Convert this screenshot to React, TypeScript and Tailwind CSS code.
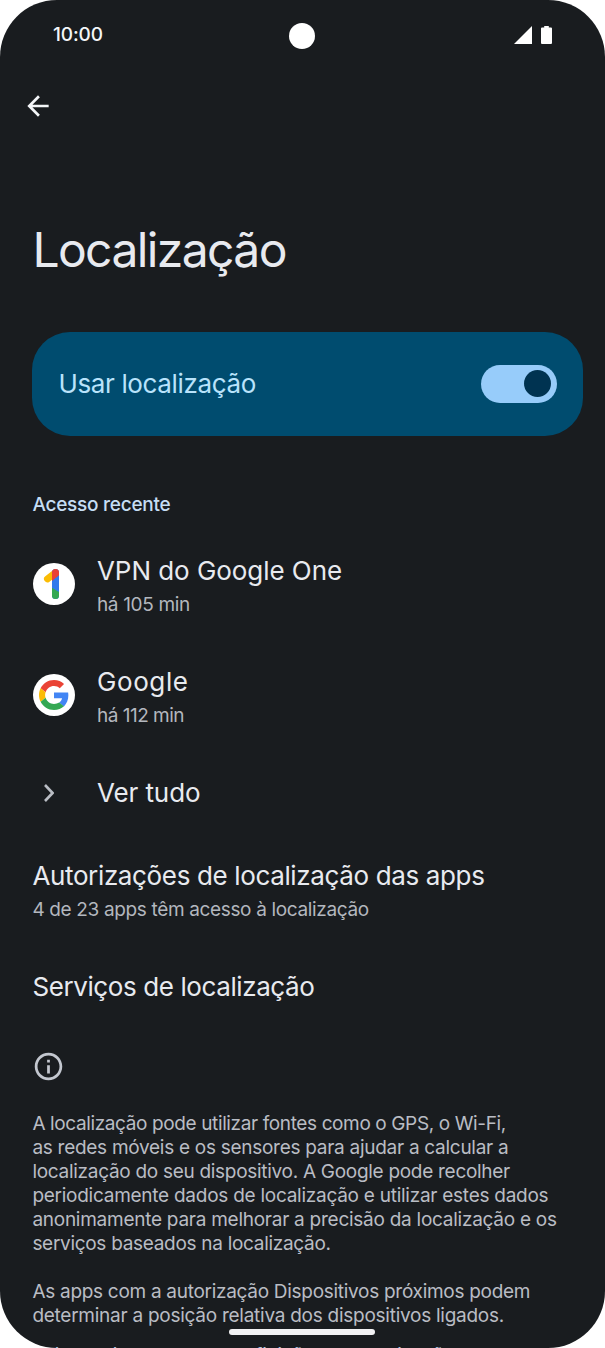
import { useState } from "react";

const infoLines = [
  { text: "A localização pode utilizar fontes como o GPS, o Wi-Fi,", track: "tracking-[-0.38px]" },
  { text: "as redes móveis e os sensores para ajudar a calcular a", track: "tracking-[-0.28px]" },
  { text: "localização do seu dispositivo. A Google pode recolher", track: "tracking-[-0.29px]" },
  { text: "periodicamente dados de localização e utilizar estes dados", track: "tracking-[-0.26px]" },
  { text: "anonimamente para melhorar a precisão da localização e os", track: "tracking-[-0.26px]" },
  { text: "serviços baseados na localização.", track: "tracking-[-0.3px]" },
];

const nearbyLines = [
  { text: "As apps com a autorização Dispositivos próximos podem", track: "tracking-[-0.29px]" },
  { text: "determinar a posição relativa dos dispositivos ligados.", track: "tracking-[-0.26px]" },
];

function StatusBar() {
  return (
    <div className="grid h-[72px] grid-cols-3 items-center pl-[53px] pr-[53px]">
      <span className="pb-[3px] text-[19px] font-medium leading-6 tracking-[-0.1px] text-[#f4f6f8]">10:00</span>
      <span className="size-[26px] justify-self-center rounded-full bg-white" />
      <div className="flex items-center justify-end gap-[9px] pb-[3px]">
        <svg width="18" height="18" viewBox="0 0 18 18" fill="white">
          <path d="M18 0v18H0z" />
        </svg>
        <svg width="11" height="18" viewBox="0 0 11 18" fill="white">
          <path d="M3.2 0h4.6v1.5H10a1 1 0 0 1 1 1V17a1 1 0 0 1-1 1H1a1 1 0 0 1-1-1V2.5a1 1 0 0 1 1-1h2.2z" />
        </svg>
      </div>
    </div>
  );
}

function GoogleOneIcon() {
  return (
    <svg width="42" height="42" viewBox="0 0 42 42">
      <circle cx="21" cy="21" r="21" fill="white" />
      <clipPath id="stem">
        <rect x="19" y="6" width="7" height="30" rx="3.5" />
      </clipPath>
      <path d="M14.4 16l8-6.3" stroke="#fbbc04" strokeWidth="6.8" strokeLinecap="round" />
      <g clipPath="url(#stem)">
        <path d="M18 5h9v31h-9z" fill="#3079ec" />
        <path d="M18 5h9v6.5l-8.2 6.6H18z" fill="#e94235" />
        <path d="M18 24.2l8.5 5V37H18z" fill="#34a853" />
      </g>
    </svg>
  );
}

function GoogleIcon() {
  return (
    <svg width="42" height="42" viewBox="0 0 42 42">
      <circle cx="21" cy="21" r="21" fill="white" />
      <g transform="translate(6 6) scale(0.625)">
        <path fill="#ea4335" d="M24 9.5c3.54 0 6.71 1.22 9.21 3.6l6.85-6.85C35.9 2.38 30.47 0 24 0 14.62 0 6.51 5.38 2.56 13.22l7.98 6.19C12.43 13.72 17.74 9.5 24 9.5z" />
        <path fill="#4285f4" d="M46.98 24.55c0-1.57-.15-3.09-.38-4.55H24v9.02h12.94c-.58 2.96-2.26 5.48-4.78 7.18l7.73 6c4.51-4.18 7.09-10.36 7.09-17.65z" />
        <path fill="#fbbc05" d="M10.53 28.59c-.48-1.45-.76-2.99-.76-4.59s.27-3.14.76-4.59l-7.98-6.19C.92 16.46 0 20.12 0 24c0 3.88.92 7.54 2.56 10.78l7.97-6.19z" />
        <path fill="#34a853" d="M24 48c6.48 0 11.93-2.13 15.89-5.81l-7.73-6c-2.15 1.45-4.92 2.3-8.16 2.3-6.26 0-11.57-4.22-13.47-9.91l-7.98 6.19C6.51 42.62 14.62 48 24 48z" />
      </g>
    </svg>
  );
}

export default function App() {
  const [enabled, setEnabled] = useState(true);

  return (
    <div className="bg-white font-['Inter',sans-serif]">
      <div className="relative h-[1348px] w-[605px] overflow-hidden rounded-[57px] bg-[#191c1f] text-[#e8eaef]">
        <StatusBar />

        {/* Back */}
        <button type="button" aria-label="Voltar" className="ml-[22px] mt-[17.5px] block">
          <svg width="32" height="32" viewBox="0 0 24 24" fill="#f4f6f8">
            <path d="M20 11H7.83l5.59-5.59L12 4l-8 8 8 8 1.41-1.41L7.83 13H20v-2z" />
          </svg>
        </button>

        <main className="pl-[32.4px] pr-[22px]">
          <h1 className="mt-[100px] text-[48px] leading-[56px] tracking-[-1.6px]">Localização</h1>

          {/* Main switch */}
          <div className="mt-[54px] flex h-[104px] w-[551px] items-center justify-between rounded-[38px] bg-[#004c6f] pl-[26px] pr-[26.5px]">
            <span className="text-[26px] leading-8 tracking-[-0.35px] text-[#b9e3fb]">Usar localização</span>
            <button
              type="button"
              role="switch"
              aria-checked={enabled}
              aria-label="Usar localização"
              onClick={() => setEnabled(!enabled)}
              className={`flex h-[38px] w-[76px] items-center rounded-full bg-[#97ccfa] px-[5.5px] ${enabled ? "justify-end" : "justify-start"}`}
            >
              <span className="size-[27px] rounded-full bg-[#003351]" />
            </button>
          </div>

          {/* Recent access */}
          <h2 className="mt-[57px] text-[19px] font-medium leading-6 tracking-[-0.25px] text-[#c6def5]">Acesso recente</h2>
          <ul className="mt-[38px] flex flex-col gap-[49px]">
            <li className="flex items-center gap-[22px]">
              <div className="ml-[0.6px] pb-[3px]"><GoogleOneIcon /></div>
              <div>
                <p className="text-[26px] leading-8 tracking-[-0.05px]">VPN do Google One</p>
                <p className="mt-1.5 text-[19px] leading-6 tracking-[-0.35px] text-[#b3b7be]">há 105 min</p>
              </div>
            </li>
            <li className="flex items-center gap-[22px]">
              <div className="ml-[0.6px] pb-[3px]"><GoogleIcon /></div>
              <div>
                <p className="text-[26px] leading-8 tracking-[0.6px]">Google</p>
                <p className="mt-1.5 text-[19px] leading-6 tracking-[-0.5px] text-[#b3b7be]">há 112 min</p>
              </div>
            </li>
            <li className="flex items-center">
              <svg className="ml-[11.6px] mr-[43px]" width="10" height="18" viewBox="0 0 10 18" fill="none" stroke="#b9bdc4" strokeWidth="2.6">
                <path d="M1 1l7.6 8L1 17" />
              </svg>
              <p className="text-[26px] leading-8 tracking-[-0.1px]">Ver tudo</p>
            </li>
          </ul>

          <section className="mt-[51px]">
            <p className="text-[26px] leading-8 tracking-[-0.36px]">Autorizações de localização das apps</p>
            <p className="mt-1.5 text-[19px] leading-6 tracking-[-0.35px] text-[#b3b7be]">4 de 23 apps têm acesso à localização</p>
          </section>
          <p className="mt-[49px] text-[26px] leading-8 tracking-[-0.4px]">Serviços de localização</p>

          {/* Footer info */}
          <svg className="mt-[47px] -ml-[0.4px]" width="33" height="33" viewBox="0 0 24 24" fill="#c3c7cf">
            <path d="M11 7h2v2h-2V7zm0 4h2v6h-2v-6zm1-9C6.48 2 2 6.48 2 12s4.48 10 10 10 10-4.48 10-10S17.52 2 12 2zm0 18c-4.41 0-8-3.59-8-8s3.59-8 8-8 8 3.59 8 8-3.59 8-8 8z" />
          </svg>
          <div className="mt-[29px] whitespace-nowrap text-[19px] leading-6 text-[#b9bcc4]">
            {infoLines.map((line) => (
              <p key={line.text} className={line.track}>{line.text}</p>
            ))}
            <div className="mt-6">
              {nearbyLines.map((line) => (
                <p key={line.text} className={line.track}>{line.text}</p>
              ))}
            </div>
            <a className="mt-4 block tracking-[-0.27px] text-[#a9c7e4]">Saiba mais acerca das definições de localização</a>
          </div>
        </main>

        {/* Gesture handle, floats over the scrolled content */}
        <div className="absolute left-[229px] top-[1329px] h-1.5 w-[146px] rounded-full bg-[#f1f1f3]" />
      </div>
    </div>
  );
}
